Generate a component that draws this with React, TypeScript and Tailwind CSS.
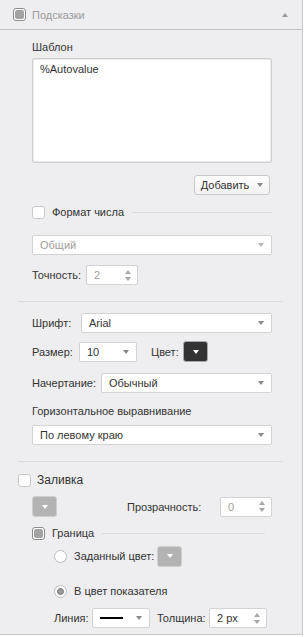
import type { ReactNode } from "react";

function Caret({ up = false, color = "border-t-[#888]" }: { up?: boolean; color?: string }) {
  return up ? (
    <span className="inline-block h-0 w-0 border-x-[3.5px] border-b-[4px] border-x-transparent border-b-[#999]" />
  ) : (
    <span className={`inline-block h-0 w-0 border-x-[3.5px] border-t-[4px] border-x-transparent ${color}`} />
  );
}

function Check({ mixed = false }: { mixed?: boolean }) {
  if (mixed) {
    return (
      <span className="flex h-[13px] w-[13px] shrink-0 items-center justify-center rounded-[3px] border border-[#8c8c8c] bg-white">
        <span className="h-[9px] w-[9px] rounded-[2px] bg-[#a3a3a3]" />
      </span>
    );
  }
  return <span className="h-[13px] w-[13px] shrink-0 rounded-[3px] border border-[#c9c9c9] bg-white" />;
}

function Radio({ on = false }: { on?: boolean }) {
  return (
    <span className="flex h-[13px] w-[13px] shrink-0 items-center justify-center rounded-full border border-[#bdbdbd] bg-white">
      {on && <span className="h-[7px] w-[7px] rounded-full border border-[#777] bg-[#9a9a9a]" />}
    </span>
  );
}

function Select({ children, w, disabled = false }: { children: ReactNode; w: string; disabled?: boolean }) {
  return (
    <div
      className={`flex h-[20px] items-center justify-between rounded-[2px] border border-[#d3d3d3] bg-white pl-[7px] pr-[7px] ${w} ${
        disabled ? "text-[#a0a0a0]" : "text-[#333]"
      }`}
    >
      <span className="flex items-center">{children}</span>
      <Caret color={disabled ? "border-t-[#b5b5b5]" : "border-t-[#888]"} />
    </div>
  );
}

function Spin({ value, w, disabled = false }: { value: string; w: string; disabled?: boolean }) {
  return (
    <div
      className={`flex h-[20px] items-center justify-between rounded-[2px] border border-[#d3d3d3] bg-white pl-[7px] pr-[6px] ${w} ${
        disabled ? "text-[#a0a0a0]" : "text-[#333]"
      }`}
    >
      <span>{value}</span>
      <span className="flex flex-col items-center gap-[3px]">
        <span className="h-0 w-0 border-x-[3.5px] border-b-[4px] border-x-transparent border-b-[#a5a5a5]" />
        <span className="h-0 w-0 border-x-[3.5px] border-t-[4px] border-x-transparent border-t-[#a5a5a5]" />
      </span>
    </div>
  );
}

function ColorBtn({ dark = false }: { dark?: boolean }) {
  return (
    <span
      className={`flex h-[21px] w-[25px] shrink-0 items-center justify-center rounded-[3px] border ${
        dark ? "border-[#a8a8a8] bg-[#333]" : "border-[#cfcfcf] bg-[#b3b3b3]"
      }`}
    >
      <Caret color="border-t-white" />
    </span>
  );
}

function Sep() {
  return <div className="-ml-[14px] -mr-[11px] h-px bg-[#dcdcde]" />;
}

export default function App() {
  return (
    <div
      className="h-[635px] w-[303px] border-r border-b border-[#c9c9c9] bg-[#eeeef0] text-[11px] leading-[16px] text-[#333]"
      style={{ fontFamily: '"Liberation Sans", Arial, sans-serif' }}
    >
      <div className="flex h-[30px] items-center justify-between border-b border-[#c2c2c2] pl-[13px] pr-[14px]">
        <div className="flex items-center gap-[6px]">
          <Check mixed />
          <span className="text-[#9b9b9b]">Подсказки</span>
        </div>
        <Caret up />
      </div>

      <div className="pl-[32px] pr-[30px] pt-[9px]">
        <div>Шаблон</div>
        <div className="mt-[3px] h-[105px] rounded-[2px] border border-[#cfcfcf] bg-white px-[7px] pt-[2px] shadow-[inset_0_0_0_1px_#ececec]">
          %Autovalue
        </div>

        <div className="mt-[12px] flex justify-end pr-[2px]">
          <button className="flex h-[20px] w-[76px] items-center justify-center gap-[8px] rounded-[3px] border border-[#c8c8c8] bg-gradient-to-b from-white to-[#f1f1f1] text-[#333]">
            Добавить
            <Caret />
          </button>
        </div>

        <div className="mt-[9px] flex h-[16px] items-center">
          <Check />
          <span className="ml-[7px]">Формат числа</span>
          <span className="ml-[8px] h-px flex-1 bg-[#dcdcde]" />
        </div>

        <div className="mt-[15px]">
          <Select w="w-full" disabled>
            Общий
          </Select>
        </div>

        <div className="mt-[10px] flex items-center">
          <span className="w-[54px]">Точность:</span>
          <Spin value="2" w="w-[52px]" disabled />
        </div>

        <div className="mt-[16px]">
          <Sep />
        </div>

        <div className="mt-[11px] flex items-center">
          <span className="w-[49px]">Шрифт:</span>
          <Select w="flex-1">Arial</Select>
        </div>

        <div className="mt-[8px] flex items-center">
          <span className="w-[47px]">Размер:</span>
          <Select w="w-[58px]">10</Select>
          <span className="ml-[14px] w-[32px]">Цвет:</span>
          <ColorBtn dark />
        </div>

        <div className="mt-[11px] flex items-center">
          <span className="w-[69px]">Начертание:</span>
          <Select w="flex-1">Обычный</Select>
        </div>

        <div className="mt-[10px]">Горизонтальное выравнивание</div>
        <div className="mt-[6px]">
          <Select w="w-full">По левому краю</Select>
        </div>

        <div className="mt-[16px]">
          <Sep />
        </div>

        <div className="-ml-[14px] mt-[10px] flex h-[16px] items-center">
          <Check />
          <span className="ml-[6px] text-[12px]">Заливка</span>
        </div>

        <div className="mt-[8px] flex items-center">
          <ColorBtn />
          <span className="ml-[70px] flex-1">Прозрачность:</span>
          <Spin value="0" w="w-[52px]" disabled />
        </div>

        <div className="mt-[8px] flex h-[16px] items-center pr-[7px]">
          <Check mixed />
          <span className="ml-[7px]">Граница</span>
          <span className="ml-[8px] h-px flex-1 bg-[#dcdcde]" />
        </div>

        <div className="ml-[22px] mt-[4px] flex h-[22px] items-center">
          <Radio />
          <span className="ml-[7px] mr-[3px]">Заданный цвет:</span>
          <ColorBtn />
        </div>

        <div className="ml-[22px] mt-[16px] flex h-[16px] items-center">
          <Radio on />
          <span className="ml-[7px]">В цвет показателя</span>
        </div>

        <div className="ml-[22px] mt-[9px] flex items-center">
          <span className="w-[38px]">Линия:</span>
          <Select w="w-[58px]">
            <span className="inline-block h-[2px] w-[23px] bg-black" />
          </Select>
          <span className="ml-[7px] w-[52px]">Толщина:</span>
          <Spin value="2 px" w="w-[58px]" />
        </div>
      </div>
    </div>
  );
}
